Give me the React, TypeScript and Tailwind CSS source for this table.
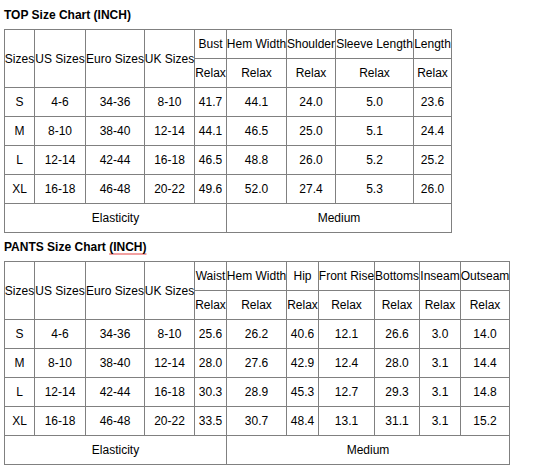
import React from "react";

const Cell = ({ children, className = "" }: { children?: React.ReactNode; className?: string }) => (
  <div className={`bg-white flex items-center justify-center whitespace-nowrap text-black ${className}`}>{children}</div>
);

const topHeaders = ["Bust", "Hem Width", "Shoulder", "Sleeve Length", "Length"];
const topRows = [
  ["S", "4-6", "34-36", "8-10", "41.7", "44.1", "24.0", "5.0", "23.6"],
  ["M", "8-10", "38-40", "12-14", "44.1", "46.5", "25.0", "5.1", "24.4"],
  ["L", "12-14", "42-44", "16-18", "46.5", "48.8", "26.0", "5.2", "25.2"],
  ["XL", "16-18", "46-48", "20-22", "49.6", "52.0", "27.4", "5.3", "26.0"],
];

const pantsHeaders = ["Waist", "Hem Width", "Hip", "Front Rise", "Bottoms", "Inseam", "Outseam"];
const pantsRows = [
  ["S", "4-6", "34-36", "8-10", "25.6", "26.2", "40.6", "12.1", "26.6", "3.0", "14.0"],
  ["M", "8-10", "38-40", "12-14", "28.0", "27.6", "42.9", "12.4", "28.0", "3.1", "14.4"],
  ["L", "12-14", "42-44", "16-18", "30.3", "28.9", "45.3", "12.7", "29.3", "3.1", "14.8"],
  ["XL", "16-18", "46-48", "20-22", "33.5", "30.7", "48.4", "13.1", "31.1", "3.1", "15.2"],
];

const baseHeaders = ["Sizes", "US Sizes", "Euro Sizes", "UK Sizes"];

export default function App() {
  return (
    <div
      className="bg-white w-[541px] h-[467px] pl-[4px] pt-[8px] text-[12px] leading-[14px] text-black"
      style={{ fontFamily: '"Liberation Sans", Arial, sans-serif' }}
    >
      <div className="h-[14px] font-bold mb-[7px]">TOP Size Chart (INCH)</div>
      <div className="grid w-fit grid-cols-[29px_50px_58px_49px_31px_59px_48px_77px_37px] auto-rows-[28px] gap-px bg-[#808080] border border-[#808080]">
        {baseHeaders.map((h) => (
          <Cell key={h} className="row-span-2">{h}</Cell>
        ))}
        {topHeaders.map((h) => (
          <Cell key={h}>{h}</Cell>
        ))}
        {topHeaders.map((h) => (
          <Cell key={h + "r"}>Relax</Cell>
        ))}
        {topRows.map((r) =>
          r.map((v, i) => <Cell key={r[0] + i}>{v}</Cell>)
        )}
        <Cell className="col-span-5">Elasticity</Cell>
        <Cell className="col-span-4">Medium</Cell>
      </div>

      <div className="h-[14px] font-bold mt-[7px] mb-[7px]">
        PANTS Size Chart{" "}
        <span className="underline decoration-[#f2a0a0] decoration-2 underline-offset-[2px]">(INCH)</span>
      </div>
      <div className="grid w-fit grid-cols-[29px_50px_58px_49px_31px_59px_31px_55px_44px_40px_48px] auto-rows-[28px] gap-px bg-[#808080] border border-[#808080]">
        {baseHeaders.map((h) => (
          <Cell key={h} className="row-span-2">{h}</Cell>
        ))}
        {pantsHeaders.map((h) => (
          <Cell key={h}>{h}</Cell>
        ))}
        {pantsHeaders.map((h) => (
          <Cell key={h + "r"}>Relax</Cell>
        ))}
        {pantsRows.map((r) =>
          r.map((v, i) => <Cell key={r[0] + i}>{v}</Cell>)
        )}
        <Cell className="col-span-5">Elasticity</Cell>
        <Cell className="col-span-6">Medium</Cell>
      </div>
    </div>
  );
}
